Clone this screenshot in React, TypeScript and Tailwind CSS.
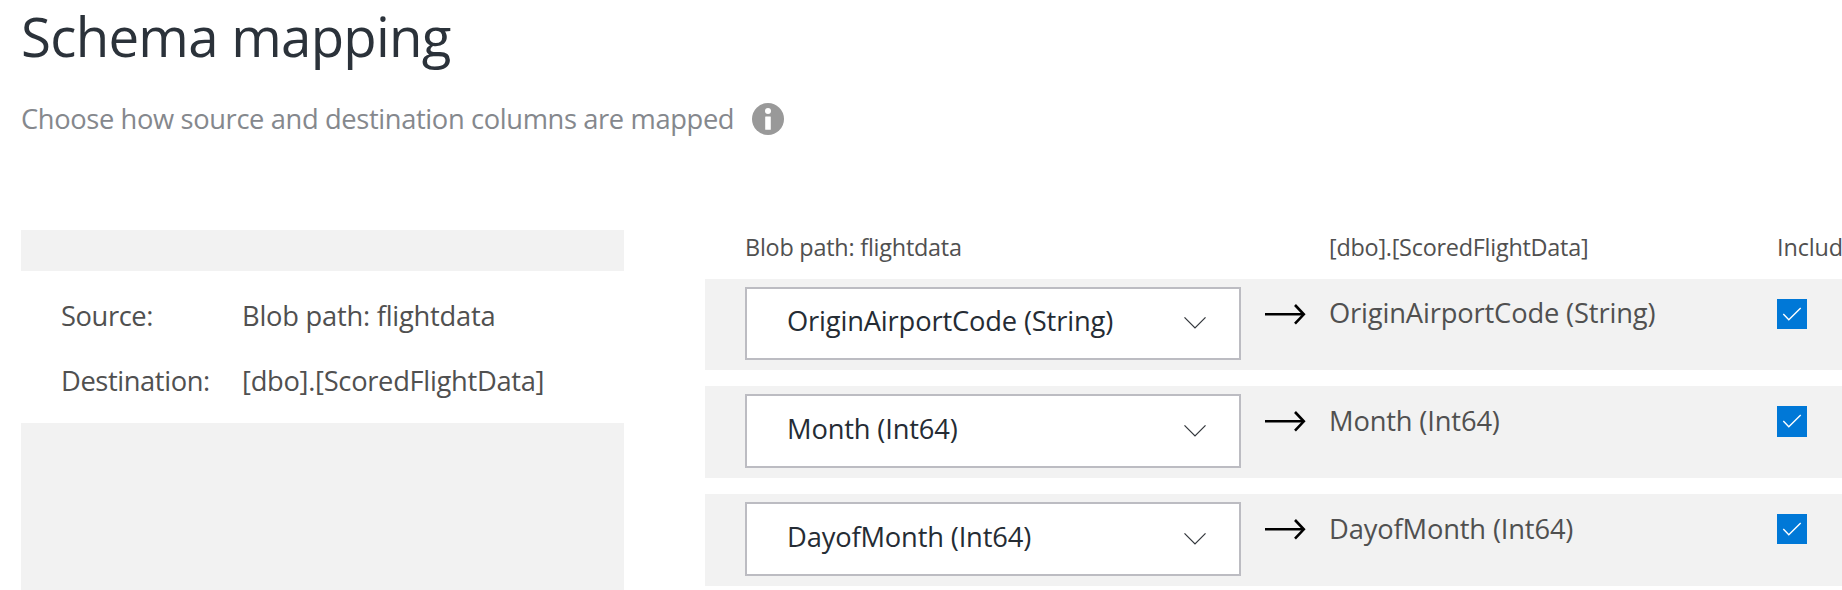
type Mapping = {
  column: string;
  rowHeight: string;
  selectPadding: string;
  targetPadding: string;
  boxHeight: string;
};

const mappings: Mapping[] = [
  { column: 'OriginAirportCode (String)', rowHeight: 'h-[91px]', selectPadding: 'pt-3', targetPadding: 'pt-3.5', boxHeight: 'h-[30px]' },
  { column: 'Month (Int64)', rowHeight: 'h-[92px]', selectPadding: 'pt-[13px]', targetPadding: 'pt-[15px]', boxHeight: 'h-[31px]' },
  { column: 'DayofMonth (Int64)', rowHeight: 'h-[92px]', selectPadding: 'pt-[13px]', targetPadding: 'pt-[15px]', boxHeight: 'h-[30px]' },
];

function InfoIcon() {
  return (
    <svg viewBox="0 0 32 32" className="size-8">
      <circle cx="16" cy="16" r="16" fill="#999999" />
      <circle cx="16" cy="8" r="3" fill="#ffffff" />
      <rect x="13.2" y="13.6" width="5.6" height="13.2" rx="0.5" fill="#ffffff" />
    </svg>
  );
}

function ChevronIcon() {
  return (
    <svg viewBox="0 0 24 14" className="mt-[15px] h-3.5 w-6" fill="none" stroke="#33373c" strokeWidth="1.3">
      <path d="M1.5 1.4 L12 11.9 L22.5 1.4" />
    </svg>
  );
}

function ArrowIcon() {
  return (
    <svg viewBox="0 0 42 22" className="h-[22px] w-[42px]" fill="none" stroke="#000000" strokeWidth="2.6">
      <path d="M0 11.3 H38.5" />
      <path d="M30 2 L38.8 11.3 L30 20.6" />
    </svg>
  );
}

function Checkbox({ height }: { height: string }) {
  return (
    <span className={`flex w-[30px] bg-[#0078d7] ${height}`}>
      <svg viewBox="0 0 30 30" className="size-[30px]" fill="none" stroke="#ffffff" strokeWidth="1.4">
        <path d="M6.3 15.1 L11.8 20.7 L23.7 8.9" />
      </svg>
    </span>
  );
}

function MappingRow({ row }: { row: Mapping }) {
  return (
    <div className={`flex w-[1137px] shrink-0 bg-[#f2f2f2] pl-10 pt-2 ${row.rowHeight}`}>
      <div className="h-full w-[496px] pb-2.5">
        <div className={`flex h-full justify-between border-2 border-[#bcbcc2] bg-white pl-10 pr-8 text-[#252c34] ${row.selectPadding}`}>
          <span className="tracking-[-0.16px]">{row.column}</span>
          <ChevronIcon />
        </div>
      </div>
      <div className="w-[88px] pl-6 pt-4">
        <ArrowIcon />
      </div>
      <div className={`-mt-2 w-[448px] tracking-[-0.15px] ${row.targetPadding}`}>{row.column}</div>
      <div className="pt-3">
        <Checkbox height={row.boxHeight} />
      </div>
    </div>
  );
}

export default function App() {
  return (
    <div className="flex h-[590px] w-[1842px] flex-col overflow-hidden bg-white pl-[21px] font-['Open_Sans','Noto_Sans',sans-serif] text-[27.3px] leading-10 text-[#505050]">
      <header className="h-[230px] shrink-0">
        <h1 className="text-[54.6px] leading-[73px] tracking-[-0.72px] text-[#2b323a]">Schema mapping</h1>
        <div className="mt-[26px] flex items-start">
          <p className="w-[731px] whitespace-nowrap tracking-[-0.37px] text-[#85888d]">
            Choose how source and destination columns are mapped
          </p>
          <div className="pt-1">
            <InfoIcon />
          </div>
        </div>
      </header>
      <main className="flex min-h-0 flex-1">
        <aside className="flex w-[603px] shrink-0 flex-col">
          <div className="h-[41px] bg-[#f2f2f2]" />
          <dl className="grid h-[152px] grid-cols-[181px_1fr] content-start gap-y-[25px] whitespace-nowrap pl-10 pt-[25px]">
            <dt className="tracking-[-0.4px]">Source:</dt>
            <dd className="tracking-[-0.24px]">Blob path: flightdata</dd>
            <dt className="tracking-[-0.4px]">Destination:</dt>
            <dd className="tracking-[-0.3px]">[dbo].[ScoredFlightData]</dd>
          </dl>
          <div className="flex-1 bg-[#f2f2f2]" />
        </aside>
        <section className="ml-[81px] flex w-[1137px] flex-col">
          <div className="flex h-[49px] shrink-0 whitespace-nowrap pl-10 text-[23.4px] leading-[35px]">
            <span className="w-[584px] shrink-0 tracking-[-0.22px]">Blob path: flightdata</span>
            <span className="w-[447px] shrink-0 tracking-[-0.24px]">[dbo].[ScoredFlightData]</span>
            <span className="shrink-0 pl-px tracking-[-0.1px]">Includ</span>
          </div>
          <div className="flex flex-col gap-4">
            {mappings.map((row) => (
              <MappingRow key={row.column} row={row} />
            ))}
          </div>
        </section>
      </main>
    </div>
  );
}
